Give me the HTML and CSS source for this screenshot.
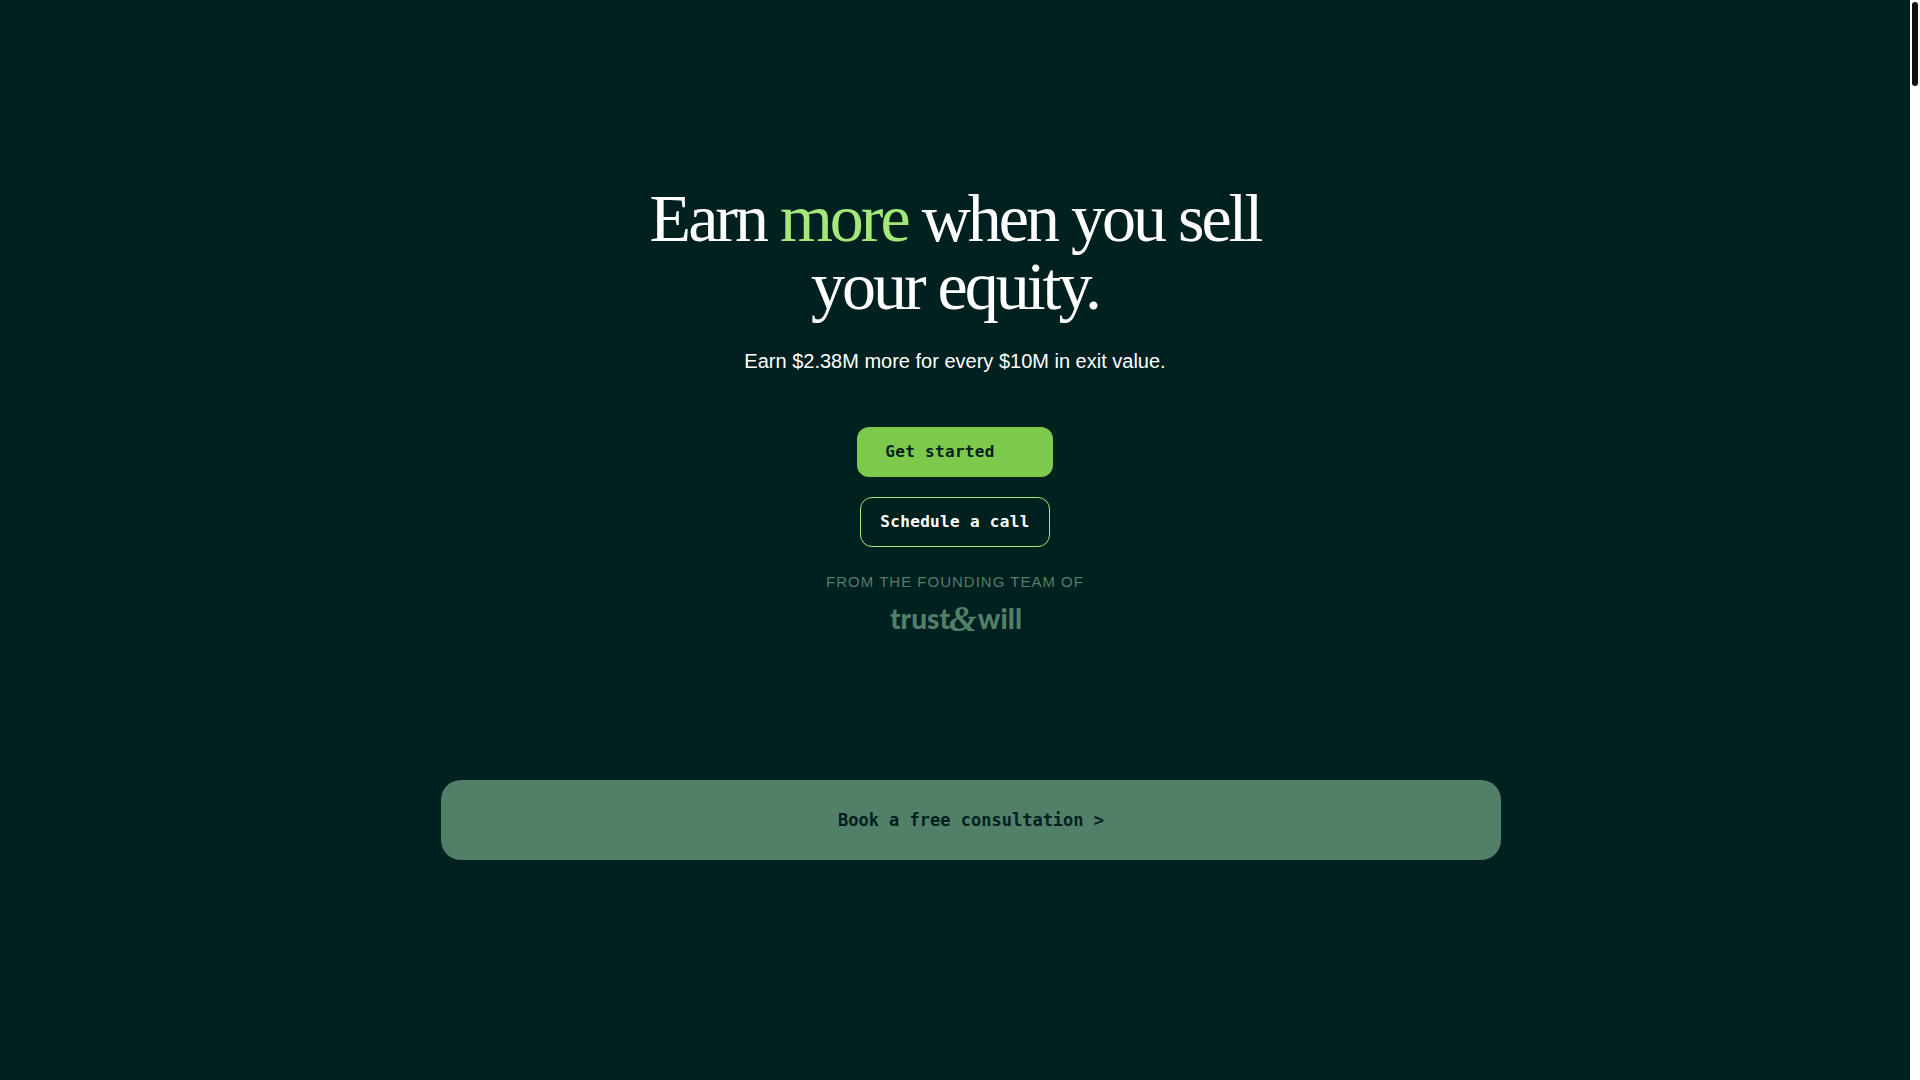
FILE: index.html
```
<!DOCTYPE html>
<html lang="en">
<head>
<meta charset="UTF-8" />
<meta name="viewport" content="width=device-width, initial-scale=1" />
<title>Earn more when you sell your equity</title>
<link rel="stylesheet" href="styles.css">
</head>
<body>

<main>
  <section class="hero">
    <h1>Earn <span class="highlight">more</span> when you sell your equity.</h1>
    <p class="subtitle">Earn $2.38M more for every $10M in exit value.</p>

    <div class="actions">
      <a class="btn btn-primary" href="#start">Get started</a>
      <a class="btn btn-outline" href="#call">Schedule a call</a>
    </div>

    <p class="founders">From the founding team of</p>
    <svg class="logo" viewBox="0 0 132 30" role="img" aria-label="trust&amp;will">
      <text class="logo-word" x="1" y="24">trust</text>
      <text class="logo-amp" x="60" y="26">&amp;</text>
      <text class="logo-word" x="133" y="24" text-anchor="end">will</text>
    </svg>
  </section>

  <section class="consult">
    <a class="consult-link" href="#consultation">Book a free consultation &gt;</a>
  </section>
</main>

<div class="scroll-track"><div class="scroll-thumb"></div></div>

</body>
</html>
```

FILE: styles.css
```
* {
  box-sizing: border-box;
}
body {
  margin: 0;
  padding-right: 10px;
  min-height: 100vh;
  overflow: hidden;
  background-color: #012020;
  color: #fff;
  font-family: "Liberation Sans", Arial, sans-serif;
}
h1,
p {
  margin: 0;
}
a {
  text-decoration: none;
}

/* hero */
.hero {
  display: flex;
  flex-direction: column;
  align-items: center;
  padding: 184px 20px 0;
  text-align: center;
}
h1 {
  max-width: 640px;
  font-family: "Liberation Serif", "Times New Roman", serif;
  font-size: 68px;
  font-weight: 400;
  line-height: 68px;
  letter-spacing: -3px;
}
.highlight {
  color: #a4e87a;
}
.subtitle {
  margin-top: 26px;
  font-size: 20px;
  line-height: 30px;
}
.actions {
  display: flex;
  flex-direction: column;
  align-items: center;
  gap: 20px;
  margin-top: 51px;
}
.btn {
  display: flex;
  align-items: center;
  height: 50px;
  padding-bottom: 2px;
  border-radius: 12px;
  font-family: "DejaVu Sans Mono", monospace;
  font-size: 16px;
  font-weight: 700;
  letter-spacing: 0.02em;
}
.btn-primary {
  padding-right: 58px;
  padding-left: 28px;
  background-color: #7dc94c;
  color: #012020;
}
.btn-outline {
  padding-right: 19px;
  padding-left: 19px;
  border: 1px solid #a4e87a;
  color: #fff;
}
.founders {
  margin-top: 25px;
  color: #517f68;
  font-size: 15px;
  line-height: 20px;
  letter-spacing: 1px;
  text-transform: uppercase;
}
.logo {
  width: 132px;
  height: 30px;
  margin-top: 13px;
  fill: #517f68;
  overflow: visible;
}
.logo-word {
  font-family: Lato, sans-serif;
  font-size: 28px;
  font-weight: 900;
}
.logo-amp {
  font-family: "Liberation Serif", serif;
  font-size: 36px;
  font-style: italic;
  font-weight: 700;
}

/* consultation banner */
.consult {
  max-width: 1092px;
  margin: 145px auto 0;
  padding-left: 32px;
}
.consult-link {
  display: flex;
  align-items: center;
  justify-content: center;
  height: 80px;
  border-radius: 20px;
  background-color: #517f68;
  color: #012020;
  font-family: "DejaVu Sans Mono", monospace;
  font-size: 17px;
  font-weight: 700;
}

/* page scrollbar */
.scroll-track {
  position: fixed;
  top: 0;
  right: 0;
  bottom: 0;
  width: 10px;
  padding: 2px;
  background-color: #fff;
}
.scroll-thumb {
  height: 84px;
  border-radius: 3px;
  background-color: #111;
}
```
